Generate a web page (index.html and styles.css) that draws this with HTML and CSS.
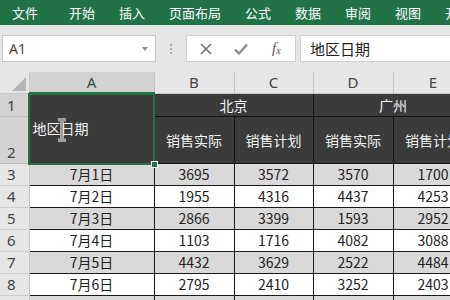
FILE: index.html
```html
<!DOCTYPE html>
<html lang="zh-CN">
<head>
    <meta charset="UTF-8">
    <meta name="viewport" content="width=device-width, initial-scale=1.0">
    <title>地区日期 - Excel</title>
    <link rel="stylesheet" href="styles.css">
</head>
<body>
    <div class="tabs">
        <span class="tab first">文件</span>
        <span class="tab">开始</span>
        <span class="tab">插入</span>
        <span class="tab">页面布局</span>
        <span class="tab">公式</span>
        <span class="tab">数据</span>
        <span class="tab">审阅</span>
        <span class="tab">视图</span>
        <span class="tab">开发工具</span>
    </div>

    <div class="formula-bar">
        <div class="name-box">
            <span>A1</span>
            <span class="caret"></span>
        </div>
        <div class="grip"><i></i><i></i><i></i></div>
        <div class="fx-box">
            <svg class="icon" width="14" height="14" viewBox="0 0 14 14">
                <path d="M2 2 L12 12 M12 2 L2 12" stroke="#707070" stroke-width="1.6" fill="none"/>
            </svg>
            <svg class="icon" width="16" height="14" viewBox="0 0 16 14">
                <path d="M2 7.5 L6 11.5 L14 2.5" stroke="#8c8c8c" stroke-width="2.4" fill="none"/>
            </svg>
            <span class="fx">f<sub>x</sub></span>
        </div>
        <div class="formula-input">地区日期</div>
    </div>

    <div class="sheet">
        <table class="grid">
            <colgroup>
                <col class="c-row">
                <col class="c-a">
                <col class="c-b">
                <col class="c-c">
                <col class="c-d">
                <col class="c-e">
            </colgroup>
            <tr class="r-head">
                <th class="corner"><span class="tri"></span></th>
                <th class="col-h sel">A</th>
                <th class="col-h">B</th>
                <th class="col-h">C</th>
                <th class="col-h">D</th>
                <th class="col-h">E</th>
            </tr>
            <tr class="r-1">
                <th class="row-h sel">1</th>
                <td class="dark region" rowspan="2">地区日期</td>
                <td class="dark" colspan="2">北京</td>
                <td class="dark" colspan="2">广州</td>
            </tr>
            <tr class="r-2">
                <th class="row-h sel bottom">2</th>
                <td class="dark">销售实际</td>
                <td class="dark">销售计划</td>
                <td class="dark">销售实际</td>
                <td class="dark">销售计划</td>
            </tr>
            <tr class="r-data odd">
                <th class="row-h">3</th>
                <td>7月1日</td><td>3695</td><td>3572</td><td>3570</td><td>1700</td>
            </tr>
            <tr class="r-data">
                <th class="row-h">4</th>
                <td>7月2日</td><td>1955</td><td>4316</td><td>4437</td><td>4253</td>
            </tr>
            <tr class="r-data odd">
                <th class="row-h">5</th>
                <td>7月3日</td><td>2866</td><td>3399</td><td>1593</td><td>2952</td>
            </tr>
            <tr class="r-data">
                <th class="row-h">6</th>
                <td>7月4日</td><td>1103</td><td>1716</td><td>4082</td><td>3088</td>
            </tr>
            <tr class="r-data odd">
                <th class="row-h">7</th>
                <td>7月5日</td><td>4432</td><td>3629</td><td>2522</td><td>4484</td>
            </tr>
            <tr class="r-data">
                <th class="row-h">8</th>
                <td>7月6日</td><td>2795</td><td>2410</td><td>3252</td><td>2403</td>
            </tr>
            <tr class="r-data odd">
                <th class="row-h">9</th>
                <td>7月7日</td><td>3310</td><td>2187</td><td>1846</td><td>3961</td>
            </tr>
        </table>

        <!-- selection frame over A1:A2 -->
        <div class="selection"><span class="handle"></span></div>

        <!-- text cursor -->
        <svg class="ibeam" width="10" height="24" viewBox="0 0 10 24">
            <path d="M1 1.5 H9 M5 1.5 V22.5 M1 22.5 H9" stroke="#ffffff" stroke-width="4" fill="none" opacity="0.55"/>
            <path d="M1.5 1.5 H8.5 M5 1.5 V22.5 M1.5 22.5 H8.5" stroke="#9a9a9a" stroke-width="2.2" fill="none"/>
        </svg>
    </div>
</body>
</html>
```

FILE: styles.css
```css
body {
    margin: 0;
    padding: 0;
    width: 450px;
    height: 300px;
    overflow: hidden;
    background: #e6e6e6;
    font-family: "Noto Sans CJK SC", "Noto Sans", sans-serif;
    color: #222;
}

/* Ribbon tabs */
.tabs {
    height: 25px;
    background: #217346;
    display: flex;
    align-items: center;
    white-space: nowrap;
    overflow: hidden;
}

.tab {
    color: #ffffff;
    font-size: 13px;
    line-height: 25px;
    padding: 0 12px;
    flex-shrink: 0;
}

.tab.first {
    margin-right: 7px;
}

/* Formula bar */
.formula-bar {
    height: 47px;
    display: flex;
    align-items: flex-start;
    padding-top: 10px;
    box-sizing: border-box;
    background: #e6e6e6;
}

.name-box {
    margin-left: 2px;
    width: 154px;
    height: 27px;
    box-sizing: border-box;
    background: #fff;
    border: 1px solid #c6c6c6;
    display: flex;
    align-items: center;
    justify-content: space-between;
    padding: 0 7px 0 6px;
    font-family: "Noto Sans", "Noto Sans CJK SC", sans-serif;
    font-size: 14px;
    color: #444;
}

.caret {
    width: 0;
    height: 0;
    border-left: 3px solid transparent;
    border-right: 3px solid transparent;
    border-top: 4px solid #8a8a8a;
}

.grip {
    width: 30px;
    height: 27px;
    display: flex;
    flex-direction: column;
    align-items: center;
    justify-content: center;
    gap: 2px;
}

.grip i {
    width: 2px;
    height: 2px;
    background: #a8a8a8;
}

.fx-box {
    width: 110px;
    height: 27px;
    box-sizing: border-box;
    background: #fff;
    border: 1px solid #d0d0d0;
    display: flex;
    align-items: center;
    padding-left: 12px;
}

.fx-box .icon {
    flex-shrink: 0;
}

.fx-box .icon + .icon {
    margin-left: 20px;
}

.fx {
    margin-left: 23px;
    font-family: "Liberation Serif", serif;
    font-style: italic;
    font-size: 15px;
    color: #555;
    line-height: 1;
}

.fx sub {
    font-size: 10px;
    vertical-align: -1px;
}

.formula-input {
    margin-left: 4px;
    flex: 1;
    height: 27px;
    box-sizing: border-box;
    background: #fff;
    border: 1px solid #d0d0d0;
    border-right: none;
    padding-left: 9px;
    font-size: 15px;
    line-height: 25px;
    color: #222;
}

/* Sheet */
.sheet {
    position: relative;
    height: 228px;
    overflow: hidden;
    background: #fff;
}

.grid {
    border-collapse: collapse;
    table-layout: fixed;
    width: 473px;
    font-size: 14px;
}

.c-row { width: 29px; }
.c-a { width: 125px; }
.c-b { width: 80px; }
.c-c { width: 79px; }
.c-d { width: 80px; }
.c-e { width: 80px; }

.grid th,
.grid td {
    padding: 0;
    text-align: center;
    white-space: nowrap;
    overflow: hidden;
}

.r-head { height: 21px; }
.r-1 { height: 23px; }
.r-2 { height: 47px; }
.r-data { height: 22px; }

.corner {
    position: relative;
    background: #e6e6e6;
    border-right: 1px solid #c8c8c8;
    border-bottom: 1px solid #c8c8c8;
}

.tri {
    position: absolute;
    right: 3px;
    bottom: 2px;
    width: 0;
    height: 0;
    border-left: 14px solid transparent;
    border-bottom: 14px solid #b5b5b5;
}

.col-h {
    background: #e6e6e6;
    border-left: 1px solid #c4c4c4;
    border-right: 1px solid #c4c4c4;
    border-bottom: 1px solid #c4c4c4;
    font-family: "Noto Sans", sans-serif;
    font-weight: normal;
    font-size: 15px;
    color: #444;
}

.col-h.sel {
    background: #d2d2d2;
    color: #2d4f3c;
    border-bottom: 2px solid #217346;
}

.row-h {
    background: #e6e6e6;
    border-bottom: 1px solid #cfcfcf;
    border-right: 1px solid #c4c4c4;
    font-family: "Noto Sans", sans-serif;
    font-weight: normal;
    font-size: 15px;
    color: #444;
    text-align: left !important;
    padding-left: 7px !important;
}

.row-h.sel {
    background: #d2d2d2;
    border-bottom: 1px solid #bdbdbd;
}

.row-h.bottom {
    vertical-align: bottom;
    padding-bottom: 1px !important;
}

.grid td {
    border: 1px solid #1a1a1a;
    color: #222;
    background: #fff;
}

.r-data.odd td {
    background: #d9d9d9;
}

.grid td.dark {
    background: #3b3b3b;
    color: #f2f2f2;
    border-color: #111;
}

.grid td.region {
    text-align: left;
    padding-left: 3px;
    padding-bottom: 1px;
}

.selection {
    position: absolute;
    left: 28px;
    top: 21px;
    width: 123px;
    height: 68px;
    border: 2px solid #217346;
    pointer-events: none;
}

.handle {
    position: absolute;
    right: -5px;
    bottom: -5px;
    width: 5px;
    height: 5px;
    background: #217346;
    border: 1px solid #fff;
}

.ibeam {
    position: absolute;
    left: 57px;
    top: 46px;
}
```
